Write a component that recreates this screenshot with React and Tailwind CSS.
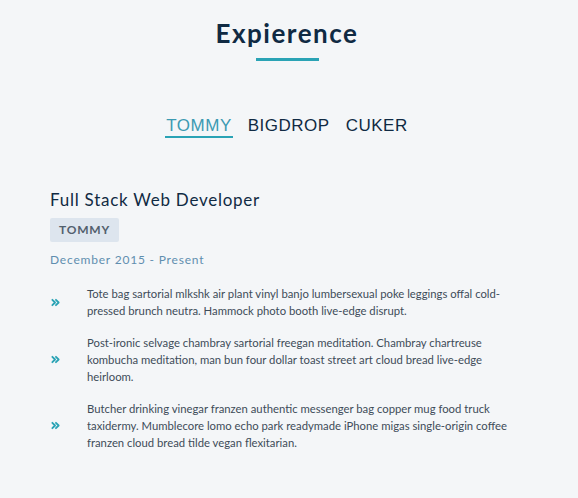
const tabs = ['TOMMY', 'BIGDROP', 'CUKER'];

const duties = [
  'Tote bag sartorial mlkshk air plant vinyl banjo lumbersexual poke leggings offal cold-pressed brunch neutra. Hammock photo booth live-edge disrupt.',
  'Post-ironic selvage chambray sartorial freegan meditation. Chambray chartreuse kombucha meditation, man bun four dollar toast street art cloud bread live-edge heirloom.',
  'Butcher drinking vinegar franzen authentic messenger bag copper mug food truck taxidermy. Mumblecore lomo echo park readymade iPhone migas single-origin coffee franzen cloud bread tilde vegan flexitarian.',
];

const Chevrons = () => (
  <svg width="9" height="9" viewBox="0 0 10 10" fill="none" stroke="#2aa3b5" strokeWidth="2" strokeLinecap="round" strokeLinejoin="round">
    <path d="M1.5 2 L4.5 5 L1.5 8" />
    <path d="M5.5 2 L8.5 5 L5.5 8" />
  </svg>
);

const App = () => {
  return (
    <div className="min-h-[498px] w-[578px] bg-[#f4f6f8] font-['Lato','Open_Sans',sans-serif] text-[#2d3748]">
      <div className="flex flex-col items-center pr-[4px] pt-[16px]">
        <h2 className="text-[26px] font-bold leading-[34px] tracking-[1.5px] text-[#102a43]">Expierence</h2>
        <div className="mt-[8px] h-[3px] w-[63px] bg-[#2aa3b5]" />
      </div>

      <div className="mt-[55px] flex justify-center gap-[14px] pr-[4px] font-['Liberation_Sans',Arial,sans-serif] text-[17px] tracking-[0.5px]">
        {tabs.map((t, i) => (
          <button
            key={t}
            className={
              i === 0
                ? 'border-b-2 border-[#2aa3b5] px-[1px] leading-[20px] text-[#3c9ab2]'
                : 'border-b-2 border-transparent px-[1px] leading-[20px] text-[#102a43]'
            }
          >
            {t}
          </button>
        ))}
      </div>

      <div className="mt-[51px] px-[50px]">
        <h3 className="text-[17px] leading-[22px] tracking-[0.75px] text-[#102a43]">Full Stack Web Developer</h3>
        <div className="mt-[7px] inline-block rounded-[2px] bg-[#dde5ee] px-[9px] py-[4px] text-[12px] font-bold leading-[16px] tracking-[0.8px] text-[#52606d]">
          TOMMY
        </div>
        <p className="mt-[10px] text-[12px] leading-[16px] tracking-[0.8px] text-[#5f8eaf]">December 2015 - Present</p>

        <div className="mt-[17px] flex flex-col gap-[15px]">
          {duties.map((d, i) => (
            <div key={i} className="flex items-center">
              <div className="w-[37px] shrink-0 pl-[1px]">
                <Chevrons />
              </div>
              <p className="max-w-[430px] text-[11.3px] leading-[17px] text-[#3e4c59]">{d}</p>
            </div>
          ))}
        </div>
      </div>
    </div>
  );
};

export default App;
